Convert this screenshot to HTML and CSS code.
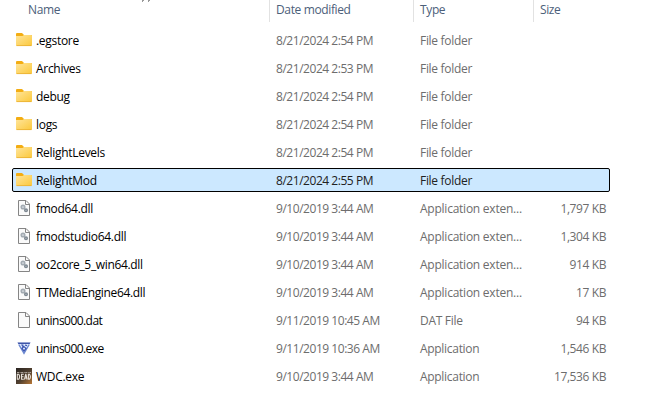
FILE: index.html
```html
<!DOCTYPE html>
<html lang="en">
<head>
<meta charset="utf-8">
<title>Files</title>
<link rel="stylesheet" href="styles.css">
</head>
<body>
<svg class="defs" width="0" height="0" aria-hidden="true">
  <defs>
    <linearGradient id="fold" x1="0" y1="0" x2="1" y2="1"><stop offset="0" stop-color="#ffe59b"/><stop offset="1" stop-color="#fbc83b"/></linearGradient>
    <linearGradient id="dusk" x1="0" y1="0" x2="1" y2="1"><stop offset="0" stop-color="#292421"/><stop offset=".55" stop-color="#51402f"/><stop offset="1" stop-color="#b97837"/></linearGradient>
    <symbol id="folder" viewBox="0 0 16 16">
      <path d="M0 2Q0 1 1 1H6L8 3H15Q16 3 16 4V8H0Z" fill="#f3ad13"/>
      <path d="M0 4H6.5L8 3H15Q16 3 16 4V13Q16 14 15 14H1Q0 14 0 13Z" fill="url(#fold)"/>
      <path d="M.5 13.6H15.5" stroke="#e9ad30" stroke-width=".8"/>
    </symbol>
    <symbol id="page" viewBox="0 0 16 16">
      <path d="M2.5 .5H10L13.5 4V15.5H2.5Z" fill="#fafafa" stroke="#858585"/>
      <path d="M9.5 .5V4.5H13.5" fill="none" stroke="#858585"/>
    </symbol>
    <symbol id="dll" viewBox="0 0 16 16">
      <use href="#page"/>
      <circle cx="7" cy="7" r="1.7" fill="#e2e7eb" stroke="#a3abb2" stroke-width="1.7"/>
      <circle cx="10" cy="10.3" r="1.3" fill="#cbd3da" stroke="#7f8992" stroke-width="1.5"/>
    </symbol>
    <symbol id="unins" viewBox="0 0 16 16">
      <path d="M1.5 2.5H14.5L8 14Z" fill="#dce8fb"/>
      <path d="M1.5 2.5H14.5L13.7 4H2.3Z" fill="#3f55a8"/>
      <path d="M2.8 4.5L8 13.3L13.2 4.5" fill="none" stroke="#6c88d0" stroke-width="1.4"/>
      <path d="M5.2 5H6.8V7.5M9 5L11 5.6M8 6.6L10 8.3L8 11L6 8.3Z" fill="none" stroke="#3851b0" stroke-width="1.2"/>
    </symbol>
    <symbol id="game" viewBox="0 0 16 16">
      <path d="M0 0H16V16H0Z" fill="url(#dusk)"/>
      <path d="M1 4.5H15" stroke="#aaa098" stroke-width="1" stroke-dasharray="2 .6 1 .5"/>
      <path d="M1.3 6.2V11.2H2.8Q4.4 9 2.8 6.2ZM7.8 6.2H5.5V11.2H7.8M5.5 8.7H7.5M8.5 11.5L9.8 6L11.1 11.5M9 10H11M12.4 6.2V11.2H13.5Q15.4 9 13.5 6.2Z" fill="none" stroke="#e7e1da" stroke-width="1.1"/>
    </symbol>
  </defs>
</svg>
<svg class="caret" viewBox="0 0 10 2" aria-hidden="true"><path d="M2 0H4V1H3V2H2ZM8 0H10V1H9V2H8Z" fill="#999"/></svg>
<main class="list">
  <div class="head"><span class="name">Name</span><span class="date">Date modified</span><span class="type">Type</span><span class="size">Size</span></div>
  <div class="row"><svg><use href="#folder"/></svg><span class="name">.egstore</span><span class="date">8/21/2024 2:54 PM</span><span class="type">File folder</span><span class="size"></span></div>
  <div class="row"><svg><use href="#folder"/></svg><span class="name">Archives</span><span class="date">8/21/2024 2:53 PM</span><span class="type">File folder</span><span class="size"></span></div>
  <div class="row"><svg><use href="#folder"/></svg><span class="name">debug</span><span class="date">8/21/2024 2:54 PM</span><span class="type">File folder</span><span class="size"></span></div>
  <div class="row"><svg><use href="#folder"/></svg><span class="name">logs</span><span class="date">8/21/2024 2:54 PM</span><span class="type">File folder</span><span class="size"></span></div>
  <div class="row"><svg><use href="#folder"/></svg><span class="name">RelightLevels</span><span class="date">8/21/2024 2:54 PM</span><span class="type">File folder</span><span class="size"></span></div>
  <div class="row selected"><svg><use href="#folder"/></svg><span class="name">RelightMod</span><span class="date">8/21/2024 2:55 PM</span><span class="type">File folder</span><span class="size"></span></div>
  <div class="row"><svg><use href="#dll"/></svg><span class="name">fmod64.dll</span><span class="date">9/10/2019 3:44 AM</span><span class="type ext">Application exten...</span><span class="size">1,797 KB</span></div>
  <div class="row"><svg><use href="#dll"/></svg><span class="name">fmodstudio64.dll</span><span class="date">9/10/2019 3:44 AM</span><span class="type ext">Application exten...</span><span class="size">1,304 KB</span></div>
  <div class="row"><svg><use href="#dll"/></svg><span class="name snug">oo2core_5_win64.dll</span><span class="date">9/10/2019 3:44 AM</span><span class="type ext">Application exten...</span><span class="size">914 KB</span></div>
  <div class="row"><svg><use href="#dll"/></svg><span class="name snug">TTMediaEngine64.dll</span><span class="date">9/10/2019 3:44 AM</span><span class="type ext">Application exten...</span><span class="size">17 KB</span></div>
  <div class="row"><svg><use href="#page"/></svg><span class="name tight">unins000.dat</span><span class="date">9/11/2019 10:45 AM</span><span class="type">DAT File</span><span class="size">94 KB</span></div>
  <div class="row"><svg><use href="#unins"/></svg><span class="name tight">unins000.exe</span><span class="date">9/11/2019 10:36 AM</span><span class="type">Application</span><span class="size">1,546 KB</span></div>
  <div class="row"><svg><use href="#game"/></svg><span class="name">WDC.exe</span><span class="date">9/10/2019 3:44 AM</span><span class="type">Application</span><span class="size">17,536 KB</span></div>
</main>
</body>
</html>
```
FILE: styles.css
```css
* { box-sizing: border-box; }
body { margin: 0; width: 649px; height: 414px; overflow: hidden; background: #fff; font: 12px/22px "Open Sans", "Noto Sans", sans-serif; letter-spacing: -.3px; }
.defs { position: absolute; }
.caret { position: absolute; left: 140px; top: 0; width: 10px; height: 2px; }
.list { width: 649px; }
.head, .row { display: grid; white-space: nowrap; }
.head { grid-template-columns: 270px 144px 120px 115px; height: 22px; line-height: 20px; margin-bottom: 6px; color: #4c607a; letter-spacing: -.37px; }
.head span { border-right: 1px solid #e2e2e2; padding-left: 6px; }
.head .name { padding-left: 28px; }
.head .size { border: 0; }
.row { grid-template-columns: 20px 240px 144px 120px 66px; width: 598px; height: 24px; line-height: 24px; margin: 0 0 4px 12px; padding-left: 3px; border: 1px solid transparent; border-radius: 2px; color: #6d6d6d; }
.row svg { width: 16px; height: 16px; margin-top: 3px; }
.row .name { color: #000; }
.row .name.snug { letter-spacing: -.35px; }
.row .name.tight { letter-spacing: -.55px; }
.row .date { letter-spacing: -.46px; }
.row .type.ext { letter-spacing: -.24px; }
.row .size { text-align: right; letter-spacing: -.4px; }
.row.selected { background: #cce8ff; border-color: #000; color: #222; }
```
